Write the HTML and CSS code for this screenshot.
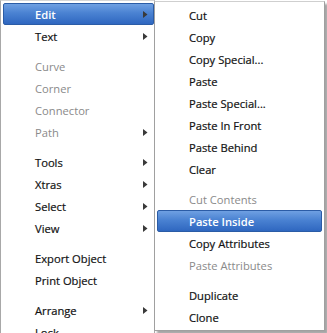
FILE: index.html
```html
<!DOCTYPE html>
<html>
<head>
<meta charset="utf-8">
<link rel="stylesheet" href="styles.css">
</head>
<body>
<div class="menus">
  <ul class="menu main">
    <li class="item active">Edit<svg class="arrow" width="5" height="7" viewBox="0 0 5 7"><polygon points="0,0 4.5,3.5 0,7"/></svg></li>
    <li class="item">Text<svg class="arrow" width="5" height="7" viewBox="0 0 5 7"><polygon points="0,0 4.5,3.5 0,7"/></svg></li>
    <li class="sep"></li>
    <li class="item disabled">Curve</li>
    <li class="item disabled">Corner</li>
    <li class="item disabled">Connector</li>
    <li class="item disabled">Path<svg class="arrow" width="5" height="7" viewBox="0 0 5 7"><polygon points="0,0 4.5,3.5 0,7"/></svg></li>
    <li class="sep"></li>
    <li class="item">Tools<svg class="arrow" width="5" height="7" viewBox="0 0 5 7"><polygon points="0,0 4.5,3.5 0,7"/></svg></li>
    <li class="item">Xtras<svg class="arrow" width="5" height="7" viewBox="0 0 5 7"><polygon points="0,0 4.5,3.5 0,7"/></svg></li>
    <li class="item">Select<svg class="arrow" width="5" height="7" viewBox="0 0 5 7"><polygon points="0,0 4.5,3.5 0,7"/></svg></li>
    <li class="item">View<svg class="arrow" width="5" height="7" viewBox="0 0 5 7"><polygon points="0,0 4.5,3.5 0,7"/></svg></li>
    <li class="sep"></li>
    <li class="item">Export Object</li>
    <li class="item">Print Object</li>
    <li class="sep"></li>
    <li class="item">Arrange<svg class="arrow" width="5" height="7" viewBox="0 0 5 7"><polygon points="0,0 4.5,3.5 0,7"/></svg></li>
    <li class="item">Lock</li>
  </ul>
  <ul class="menu sub">
    <li class="item">Cut</li>
    <li class="item">Copy</li>
    <li class="item">Copy Special...</li>
    <li class="item">Paste</li>
    <li class="item">Paste Special...</li>
    <li class="item">Paste In Front</li>
    <li class="item">Paste Behind</li>
    <li class="item">Clear</li>
    <li class="sep"></li>
    <li class="item disabled">Cut Contents</li>
    <li class="item active">Paste Inside</li>
    <li class="item">Copy Attributes</li>
    <li class="item disabled">Paste Attributes</li>
    <li class="sep"></li>
    <li class="item">Duplicate</li>
    <li class="item">Clone</li>
  </ul>
</div>
</body>
</html>
```
FILE: styles.css
```css
html, body {
  margin: 0;
  padding: 0;
  background: #ffffff;
  overflow: hidden;
}
body {
  font-family: "Open Sans", "DejaVu Sans", sans-serif;
  font-size: 11.2px;
  color: #121212;
}
.menus {
  display: flex;
  align-items: flex-start;
}
.menu {
  list-style: none;
  margin: 0;
  background: #ffffff;
  box-sizing: border-box;
}
.main {
  width: 155px;
  height: 345px;
  border-left: 1px solid #a8a8a8;
  border-top: 1px solid #d6d6d6;
  border-right: 1px solid #a8a8a8;
  padding: 2px 0 2px 2px;
}
.sub {
  width: 171px;
  margin-top: 1px;
  margin-left: -1px;
  border: 1px solid #a0a0a0;
  border-top-color: #cfcfcf;
  padding: 2px;
  box-shadow: 3px 3px 2px rgba(0, 0, 0, 0.35);
  position: relative;
  z-index: 1;
}
.item {
  height: 22px;
  box-sizing: border-box;
  padding-left: 31px;
  padding-right: 6px;
  display: flex;
  align-items: center;
  justify-content: space-between;
  white-space: nowrap;
  border: 1px solid transparent;
  border-radius: 2px;
  -webkit-text-stroke: 0.2px currentColor;
}
.item.disabled {
  color: #8a8a8a;
  -webkit-text-stroke: 0;
}
.item.active {
  color: #ffffff;
  font-weight: 600;
  -webkit-text-stroke: 0;
  background: linear-gradient(to bottom, #6fa0e2 0%, #4a82d2 45%, #2f67c0 100%);
  border-color: #2b5ca6;
}
.main .item {
  padding-left: 31px;
  padding-right: 5px;
}
.arrow {
  fill: #3a3a3a;
  flex: none;
}
.sep {
  height: 8px;
}
```
